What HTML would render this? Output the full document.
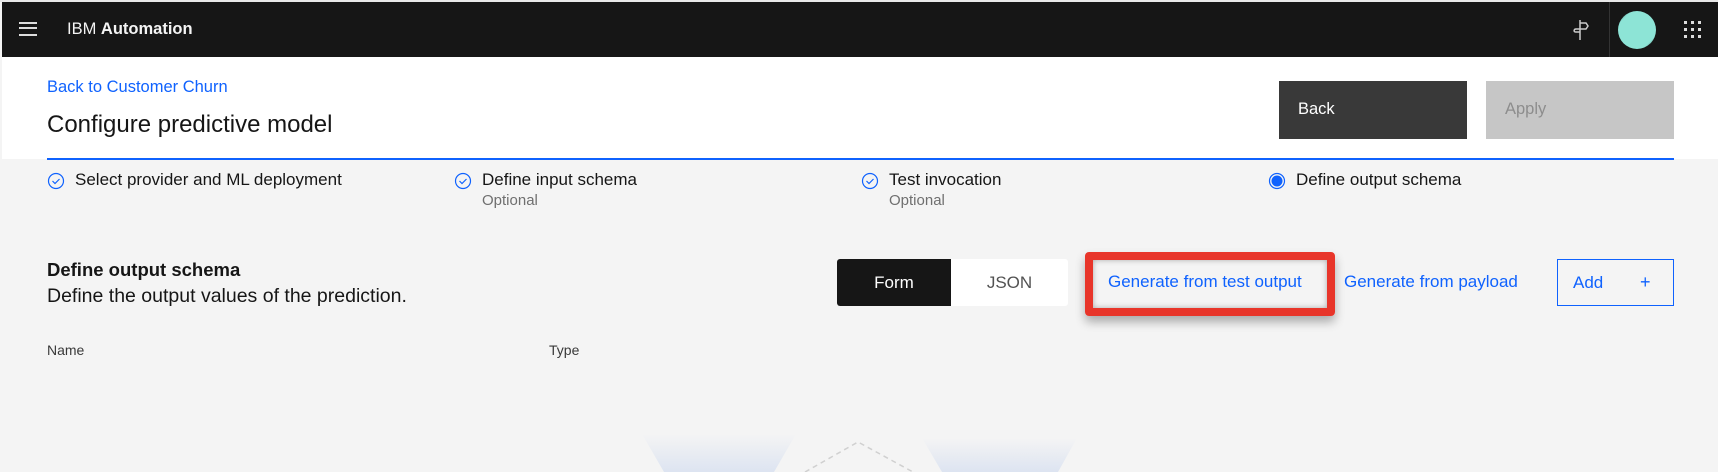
<!DOCTYPE html>
<html><head><meta charset="utf-8"><style>
*{margin:0;padding:0;box-sizing:border-box}
body{width:1718px;height:472px;overflow:hidden;background:#f4f4f4;font-family:"Liberation Sans",sans-serif;position:relative;color:#161616}
.a{position:absolute;white-space:nowrap}
</style></head><body>
<div class="a" style="left:0;top:0;width:1718px;height:2px;background:#e8e8e8"></div>
<div class="a" style="left:2px;top:2px;width:1716px;height:55px;background:#161616"></div>
<div class="a" style="left:19px;top:22px;width:18px;height:14px;border-top:2px solid #ddd;border-bottom:2px solid #ddd"></div>
<div class="a" style="left:19px;top:27px;width:18px;height:4px;border-top:2px solid #ddd;"></div>
<div class="a" style="left:67px;top:20px;color:#f4f4f4;font-size:16.5px">IBM <b>Automation</b></div>
<svg class="a" style="left:1568px;top:18px" width="22" height="24" viewBox="0 0 22 24"><path d="M12 2v20M12 5h6l2 3-2 3H8c-2 0-3 3 0 3h4" fill="none" stroke="#ccc" stroke-width="1.5"/></svg>
<div class="a" style="left:1609px;top:2px;width:1px;height:55px;background:#333"></div>
<div class="a" style="left:1618px;top:11px;width:38px;height:38px;border-radius:50%;background:linear-gradient(135deg,#1d3b40 0%,#8de4d6 18%,#8de4d6 82%,#1d3b40 100%)"></div>
<svg class="a" style="left:1684px;top:21px" width="18" height="18"><g fill="#ddd"><rect x="0" y="0" width="3" height="3"/><rect x="7" y="0" width="3" height="3"/><rect x="14" y="0" width="3" height="3"/><rect x="0" y="7" width="3" height="3"/><rect x="7" y="7" width="3" height="3"/><rect x="14" y="7" width="3" height="3"/><rect x="0" y="14" width="3" height="3"/><rect x="7" y="14" width="3" height="3"/><rect x="14" y="14" width="3" height="3"/></g></svg>
<div class="a" style="left:2px;top:57px;width:1716px;height:102px;background:#fff"></div>
<div class="a" style="left:47px;top:78px;color:#0f62fe;font-size:16.5px">Back to Customer Churn</div>
<div class="a" style="left:47px;top:111px;font-size:24px">Configure predictive model</div>
<div class="a" style="left:1279px;top:81px;width:188px;height:58px;background:#393939;color:#fff;font-size:16.5px;padding:19px 0 0 19px">Back</div>
<div class="a" style="left:1486px;top:81px;width:188px;height:58px;background:#c6c6c6;color:#8d8d8d;font-size:16.5px;padding:19px 0 0 19px">Apply</div>
<div class="a" style="left:47px;top:158px;width:1627px;height:2px;background:#0f62fe"></div>
<svg class="a" style="left:47px;top:172px" width="18" height="18"><circle cx="9" cy="9" r="7.5" fill="none" stroke="#0f62fe" stroke-width="1.2"/><path d="M5.5 9l2.5 2.5 4.5-4.5" fill="none" stroke="#0f62fe" stroke-width="1.2"/></svg>
<div class="a" style="left:75px;top:170px;font-size:17px">Select provider and ML deployment</div>
<svg class="a" style="left:454px;top:172px" width="18" height="18"><circle cx="9" cy="9" r="7.5" fill="none" stroke="#0f62fe" stroke-width="1.2"/><path d="M5.5 9l2.5 2.5 4.5-4.5" fill="none" stroke="#0f62fe" stroke-width="1.2"/></svg>
<div class="a" style="left:482px;top:170px;font-size:17px">Define input schema</div>
<div class="a" style="left:482px;top:192px;font-size:15px;color:#6f6f6f">Optional</div>
<svg class="a" style="left:861px;top:172px" width="18" height="18"><circle cx="9" cy="9" r="7.5" fill="none" stroke="#0f62fe" stroke-width="1.2"/><path d="M5.5 9l2.5 2.5 4.5-4.5" fill="none" stroke="#0f62fe" stroke-width="1.2"/></svg>
<div class="a" style="left:889px;top:170px;font-size:17px">Test invocation</div>
<div class="a" style="left:889px;top:192px;font-size:15px;color:#6f6f6f">Optional</div>
<svg class="a" style="left:1268px;top:172px" width="18" height="18"><circle cx="9" cy="9" r="7.5" fill="none" stroke="#0f62fe" stroke-width="1.2"/><circle cx="9" cy="9" r="5.5" fill="#0f62fe"/></svg>
<div class="a" style="left:1296px;top:170px;font-size:17px">Define output schema</div>
<div class="a" style="left:47px;top:259px;font-size:18.5px;font-weight:bold">Define output schema</div>
<div class="a" style="left:47px;top:285px;font-size:19.5px">Define the output values of the prediction.</div>
<div class="a" style="left:837px;top:259px;width:231px;height:47px;background:#fff;border-radius:3px"></div>
<div class="a" style="left:837px;top:259px;width:114px;height:47px;background:#161616;color:#fff;font-size:17px;text-align:center;line-height:47px;border-radius:3px 0 0 3px">Form</div>
<div class="a" style="left:951px;top:259px;width:117px;height:47px;color:#525252;font-size:17px;text-align:center;line-height:47px">JSON</div>
<div class="a" style="left:1085px;top:252px;width:250px;height:64px;border:8px solid #e8352a;border-radius:4px;box-shadow:0 6px 10px rgba(0,0,0,.3),inset 0 0 6px rgba(0,0,0,.3)"></div>
<div class="a" style="left:1108px;top:272px;color:#0f62fe;font-size:17px">Generate from test output</div>
<div class="a" style="left:1344px;top:272px;color:#0f62fe;font-size:17px">Generate from payload</div>
<div class="a" style="left:1557px;top:259px;width:117px;height:47px;border:1px solid #0f62fe;color:#0f62fe;font-size:17px;line-height:45px;padding-left:15px">Add<span style="position:absolute;left:82px;font-size:18px">+</span></div>
<div class="a" style="left:47px;top:342px;font-size:14px;color:#393939">Name</div>
<div class="a" style="left:549px;top:342px;font-size:14px;color:#393939">Type</div>
<svg class="a" style="left:600px;top:420px" width="520" height="52"><defs><linearGradient id="g" x1="0" y1="0" x2="0" y2="1"><stop offset="0" stop-color="#f4f4f4"/><stop offset="1" stop-color="#dde4f1"/></linearGradient></defs>
<polygon points="42,14 196,14 174,52 64,52" fill="url(#g)"/>
<polygon points="322,18 477,18 458,52 342,52" fill="url(#g)"/>
<path d="M205 52L258 22L313 52" fill="none" stroke="#d0d0d0" stroke-width="1.5" stroke-dasharray="5 4"/></svg>
</body></html>
